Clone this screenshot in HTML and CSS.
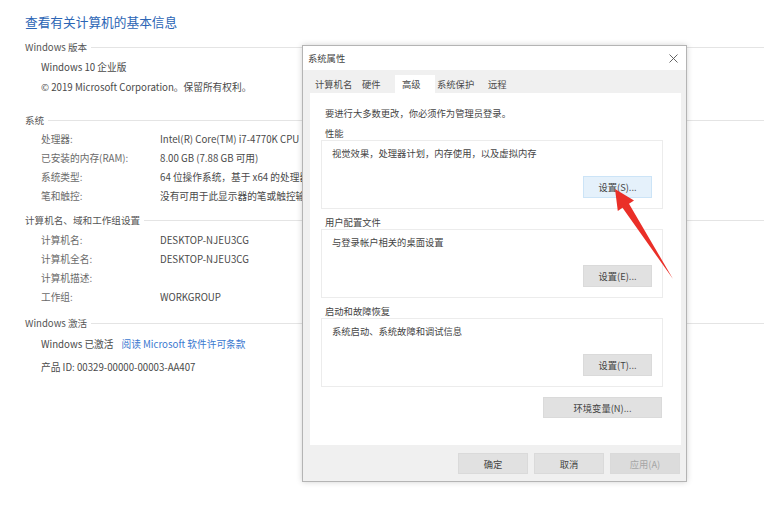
FILE: index.html
```html
<!DOCTYPE html>
<html lang="zh-CN">
<head>
<meta charset="utf-8">
<title>系统</title>
<link rel="stylesheet" href="styles.css">
</head>
<body>
<main class="page">
  <h1 class="title">查看有关计算机的基本信息</h1>

  <section class="sec sec-ver">
    <div class="sec-head">Windows 版本</div>
    <div class="rows rows-ver">
      <div class="line">Windows 10 企业版</div>
      <div class="line">© 2019 Microsoft Corporation。保留所有权利。</div>
    </div>
  </section>

  <section class="sec sec-sys">
    <div class="sec-head">系统</div>
    <div class="rows rows-sys">
      <div class="row"><span class="lbl">处理器:</span><span class="val">Intel(R) Core(TM) i7-4770K CPU</span></div>
      <div class="row"><span class="lbl">已安装的内存(RAM):</span><span class="val">8.00 GB (7.88 GB 可用)</span></div>
      <div class="row"><span class="lbl">系统类型:</span><span class="val">64 位操作系统，基于 x64 的处理器</span></div>
      <div class="row"><span class="lbl">笔和触控:</span><span class="val">没有可用于此显示器的笔或触控输入</span></div>
    </div>
  </section>

  <section class="sec sec-name">
    <div class="sec-head">计算机名、域和工作组设置</div>
    <div class="rows rows-name">
      <div class="row"><span class="lbl">计算机名:</span><span class="val">DESKTOP-NJEU3CG</span></div>
      <div class="row"><span class="lbl">计算机全名:</span><span class="val">DESKTOP-NJEU3CG</span></div>
      <div class="row"><span class="lbl">计算机描述:</span><span class="val"></span></div>
      <div class="row"><span class="lbl">工作组:</span><span class="val">WORKGROUP</span></div>
    </div>
  </section>

  <section class="sec sec-act">
    <div class="sec-head">Windows 激活</div>
    <div class="rows rows-act">
      <div class="line">Windows 已激活<a class="link">阅读 Microsoft 软件许可条款</a></div>
      <div class="line">产品 ID: 00329-00000-00003-AA407</div>
    </div>
  </section>
</main>

<div class="dialog">
  <div class="dlg-title">
    <span>系统属性</span>
    <svg class="close" width="9" height="9" viewBox="0 0 9 9"><path d="M0.5 0.5L8.5 8.5M8.5 0.5L0.5 8.5" stroke="#555" stroke-width="0.9" fill="none"/></svg>
  </div>
  <div class="dlg-body">
    <div class="tabs">
      <span class="tab t1">计算机名</span>
      <span class="tab t2">硬件</span>
      <span class="tab t3 sel">高级</span>
      <span class="tab t4">系统保护</span>
      <span class="tab t5">远程</span>
    </div>
    <div class="panel">
      <p class="intro">要进行大多数更改，你必须作为管理员登录。</p>

      <div class="group">
        <div class="g-head">性能</div>
        <div class="g-box">
          <div class="g-text">视觉效果，处理器计划，内存使用，以及虚拟内存</div>
          <div class="g-actions"><button class="btn btn-hot">设置(S)...</button></div>
        </div>
      </div>

      <div class="group">
        <div class="g-head">用户配置文件</div>
        <div class="g-box">
          <div class="g-text">与登录帐户相关的桌面设置</div>
          <div class="g-actions"><button class="btn">设置(E)...</button></div>
        </div>
      </div>

      <div class="group">
        <div class="g-head">启动和故障恢复</div>
        <div class="g-box">
          <div class="g-text">系统启动、系统故障和调试信息</div>
          <div class="g-actions"><button class="btn">设置(T)...</button></div>
        </div>
      </div>

      <div class="env"><button class="btn btn-env">环境变量(N)...</button></div>
    </div>
    <div class="dlg-foot">
      <button class="btn btn-foot">确定</button>
      <button class="btn btn-foot">取消</button>
      <button class="btn btn-foot btn-off">应用(A)</button>
    </div>
  </div>
</div>

<svg class="arrow" width="764" height="516" viewBox="0 0 764 516">
  <polygon points="615,189 634,200.5 629,203.8 673,279 622.5,207.8 617.8,211" fill="#ea2f28"/>
</svg>
</body>
</html>
```

FILE: styles.css
```css
* { box-sizing: border-box; }

html, body {
  margin: 0;
  padding: 0;
  background: #fff;
}

body {
  width: 764px;
  height: 516px;
  overflow: hidden;
  position: relative;
  font-family: "Noto Sans CJK SC", "Noto Sans", sans-serif;
  color: #4a4a4a;
}

.page {
  padding: 14px 0 0 25px;
}

.title {
  margin: 0;
  font-size: 12.7px;
  line-height: 16px;
  font-weight: normal;
  color: #2b65b5;
}

.sec-head {
  display: flex;
  align-items: center;
  font-size: 9.6px;
  line-height: 14px;
  color: #555;
  white-space: nowrap;
}

.sec-head::after {
  content: "";
  flex: 1;
  height: 1px;
  margin-left: 4px;
  background: #e4e4e4;
}

.sec-ver { margin-top: 10px; }
.sec-sys { margin-top: 16px; }
.sec-name { margin-top: 7.5px; }
.sec-act { margin-top: 9.5px; }

.rows {
  padding-left: 16px;
  font-size: 9.7px;
  white-space: nowrap;
}

.rows-ver { padding-top: 3px; line-height: 20px; }
.rows-sys { padding-top: 2.5px; line-height: 19px; }
.rows-name { padding-top: 3.5px; line-height: 19px; }
.rows-act { padding-top: 2.5px; line-height: 23px; }

.line { color: #4a4a4a; }

.row {
  display: grid;
  grid-template-columns: 119px auto;
  justify-content: start;
  height: 19px;
}

.lbl { color: #6a6a6a; }
.val { color: #4a4a4a; }

.link {
  margin-left: 8px;
  color: #3a78d0;
}

/* dialog */
.dialog {
  position: absolute;
  left: 302px;
  top: 45px;
  width: 385px;
  background: #f0f0f0;
  border: 1px solid #b4b4b4;
  box-shadow: 0 0 6px rgba(0, 0, 0, 0.18);
  font-size: 9.3px;
  color: #444;
}

.dlg-title {
  height: 24px;
  background: #fff;
  display: flex;
  align-items: center;
  justify-content: space-between;
  padding: 0 8px 0 5px;
  line-height: 24px;
}

.close { display: block; }

.dlg-body {
  padding: 0 5px 7px 7px;
}

.tabs {
  display: flex;
  align-items: flex-end;
  height: 23px;
}

.tab {
  height: 18px;
  line-height: 19px;
  white-space: nowrap;
  color: #4a4a4a;
}

.t1 { width: 47px; padding-left: 5px; }
.t2 { width: 38px; padding-left: 5px; }
.t3 { width: 40px; padding-left: 7px; }
.t4 { width: 51px; padding-left: 2px; }
.t5 { width: 37px; padding-left: 2px; }

.tab.sel { background: #fff; }

.panel {
  background: #fff;
  height: 352px;
  padding: 13px 19px 0 11px;
}

.intro {
  margin: 0 0 0 4px;
  line-height: 14px;
}

.group { margin-top: 6px; }

.g-head {
  line-height: 14px;
  height: 14px;
  padding-left: 4px;
  white-space: nowrap;
}

.g-box {
  margin-right: -1px;
  border: 1px solid #ececec;
  padding: 5px 10px 10px 10px;
}

.g-text { line-height: 14px; }

.g-actions {
  display: flex;
  justify-content: flex-end;
  margin-top: 16px;
}

.btn {
  font-family: inherit;
  font-size: 9.3px;
  color: #444;
  background: #e1e1e1;
  border: 1px solid #dadada;
  height: 22px;
  width: 69px;
  padding: 0;
  margin: 0;
}

.btn-hot {
  background: #e5f1fb;
  border-color: #cce4f7;
}

.env {
  display: flex;
  justify-content: flex-end;
  margin-top: 10px;
}

.btn-env {
  width: 119px;
  height: 21px;
}

.dlg-foot {
  display: flex;
  justify-content: flex-end;
  gap: 6px;
  padding-top: 8px;
  padding-right: 1px;
}

.btn-foot {
  width: 70px;
  height: 21px;
}

.btn-off {
  color: #a6a6a6;
  background: #dcdcdc;
}

.arrow {
  position: absolute;
  left: 0;
  top: 0;
  pointer-events: none;
}
```
